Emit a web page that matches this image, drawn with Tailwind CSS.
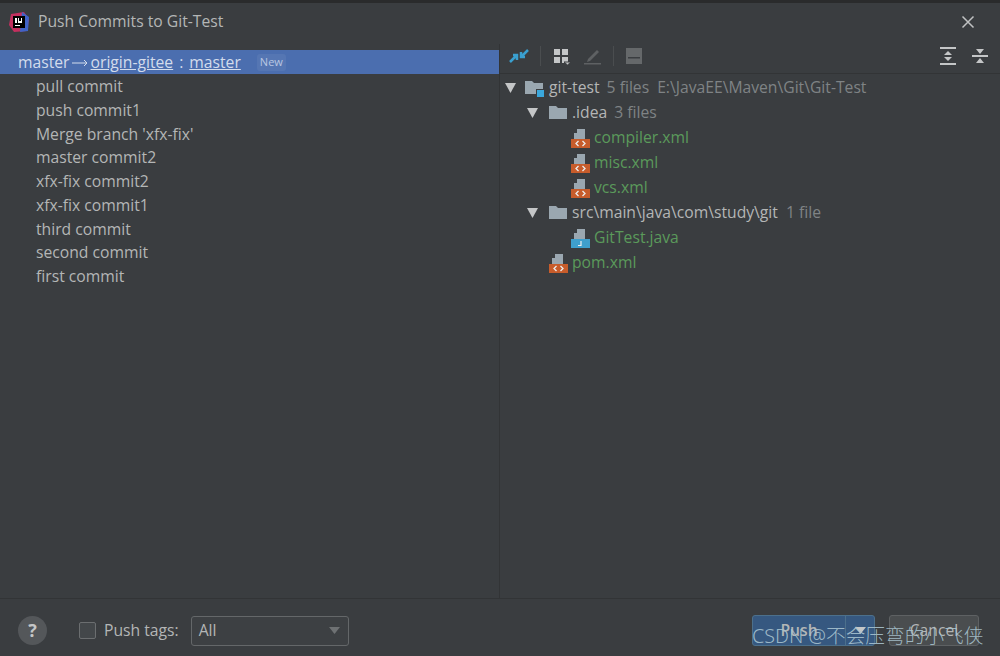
<!DOCTYPE html>
<html lang="en">
<head>
  <meta charset="UTF-8">
  <title>Push Commits to Git-Test</title>
  <script src="https://cdn.jsdelivr.net/npm/@tailwindcss/browser@4"></script>
</head>
<body class="w-[1000px] h-[656px] overflow-hidden bg-[#3a3d40] text-[#b4b6b6] font-['Open_Sans','Noto_Sans',sans-serif] text-[15.7px] relative">
  <div class="h-[3px] bg-[#2a2b2c]"></div>

  <!-- Title bar -->
  <div class="h-[41px] pb-[4px] pl-[8px] pr-[25px] flex items-center">
    <svg width="22" height="22" viewBox="0 0 22 22" class="shrink-0">
      <path d="M3 3 L16 1 L21 8 L19 20 L6 21 L1 14 Z" fill="#c2305f"/>
      <path d="M14 1 L21 6 L20 20 L12 21 Z" fill="#3f63c8"/>
      <rect x="5" y="5" width="12" height="12" fill="#000"/>
      <rect x="7" y="7" width="2" height="5" fill="#fff"/>
      <rect x="10" y="7" width="4" height="5" fill="#fff"/>
      <rect x="11" y="7" width="2" height="3" fill="#000"/>
      <rect x="7" y="14" width="5" height="1" fill="#fff"/>
    </svg>
    <span class="ml-[8px]">Push Commits to Git-Test</span>
    <svg width="14" height="14" viewBox="0 0 14 14" class="ml-auto" fill="none" stroke="#c0c2c3" stroke-width="1.5"><path d="M1.5 1.5 L12.5 12.5 M12.5 1.5 L1.5 12.5"/></svg>
  </div>

  <!-- Main panes -->
  <div class="h-[554px] flex">
    <!-- Commits -->
    <div class="w-[500px] border-r border-[#323436] pt-[6px]">
      <div class="h-[24px] pt-[1px] bg-[#4b6eaf] pl-[18px] flex items-center text-[#d3dcec]">
        <span>master</span>
        <svg width="16" height="8" viewBox="0 0 16 8" class="ml-[2px] mr-[3px]" fill="none" stroke="#d3dcec" stroke-width="1"><path d="M0 4 H15 M12 1 L15 4 L12 7"/></svg>
        <span class="underline">origin-gitee</span>
        <span class="mx-[6px]">:</span>
        <span class="underline">master</span>
        <span class="ml-[16px] text-[11px] text-[#b9c7e2] bg-[#5576b3] rounded-[3px] px-[3px]">New</span>
      </div>
      <ul class="pl-[36px] pt-[1px]">
        <li class="h-[23.75px] leading-[23.75px]">pull commit</li>
        <li class="h-[23.75px] leading-[23.75px]">push commit1</li>
        <li class="h-[23.75px] leading-[23.75px]">Merge branch 'xfx-fix'</li>
        <li class="h-[23.75px] leading-[23.75px]">master commit2</li>
        <li class="h-[23.75px] leading-[23.75px]">xfx-fix commit2</li>
        <li class="h-[23.75px] leading-[23.75px]">xfx-fix commit1</li>
        <li class="h-[23.75px] leading-[23.75px]">third commit</li>
        <li class="h-[23.75px] leading-[23.75px]">second commit</li>
        <li class="h-[23.75px] leading-[23.75px]">first commit</li>
      </ul>
    </div>

    <!-- Changed files -->
    <div class="flex-1 min-w-0">
      <!-- Toolbar -->
      <div class="h-[30px] pb-[6px] border-b border-[#323436] flex items-center pl-[9px] pr-[12px]">
        <svg width="20" height="18" viewBox="0 0 20 18"><path d="M1 15 L7 9 M4 8 H8 V13 M19 3 L13 9 M16 10 H12 V5" fill="none" stroke="#3aa0d0" stroke-width="2.5"/></svg>
        <div class="w-px h-[20px] bg-[#4a4d4f] ml-[11px]"></div>
        <svg width="18" height="18" viewBox="0 0 18 18" class="ml-[12px]" fill="#c4c6c7"><rect x="1" y="2" width="6" height="6"/><rect x="9" y="2" width="6" height="6"/><rect x="1" y="10" width="6" height="6"/><rect x="9" y="10" width="6" height="6"/><path d="M11 15 H18 L14.5 18 Z" stroke="#3a3d40"/></svg>
        <svg width="20" height="18" viewBox="0 0 20 18" class="ml-[12px]"><path d="M5 12 L14 3 L16 5 L7 14 L4 15 Z" fill="#5e6163"/><rect x="1" y="16" width="17" height="1.5" fill="#5e6163"/></svg>
        <div class="w-px h-[20px] bg-[#4a4d4f] ml-[10px]"></div>
        <svg width="16" height="16" viewBox="0 0 16 16" class="ml-[12px]"><rect x="0" y="0" width="16" height="16" fill="#65686a"/><rect x="2" y="9" width="12" height="1.5" fill="#3a3d40"/></svg>
        <svg width="18" height="20" viewBox="0 0 18 20" class="ml-auto" fill="#c4c6c7"><rect x="1" y="1" width="16" height="2"/><rect x="1" y="17" width="16" height="2"/><path d="M9 5 L13 9 H5 Z M9 15 L13 11 H5 Z"/></svg>
        <svg width="16" height="18" viewBox="0 0 16 18" class="ml-[15px]" fill="#c4c6c7"><rect x="0" y="8" width="16" height="2"/><path d="M8 7 L12 2 H4 Z M8 11 L12 16 H4 Z"/></svg>
      </div>

      <!-- Tree -->
      <div class="pt-[1px]">
        <div class="h-[25px] flex items-center pl-[5px]">
          <svg width="11" height="10" viewBox="0 0 11 10" fill="#c4c6c7"><path d="M0 0 H11 L5.5 10 Z"/></svg>
          <svg width="20" height="18" viewBox="0 0 20 18" class="ml-[9px]"><path d="M0 2 H7 L9 4 H18 V15 H0 Z" fill="#9aa7b0"/><rect x="11" y="10" width="8" height="8" fill="#3a3d40"/><rect x="12" y="11" width="7" height="7" fill="#3aa7dc"/></svg>
          <span class="ml-[4px]">git-test</span>
          <span class="ml-[7px] text-[#7f8385]">5 files</span>
          <span class="ml-[8px] text-[#7f8385]">E:\JavaEE\Maven\Git\Git-Test</span>
        </div>
        <div class="h-[25px] flex items-center pl-[27px]">
          <svg width="11" height="10" viewBox="0 0 11 10" fill="#c4c6c7"><path d="M0 0 H11 L5.5 10 Z"/></svg>
          <svg width="18" height="15" viewBox="0 0 18 15" class="ml-[11px]"><path d="M0 1 H7 L9 3 H18 V14 H0 Z" fill="#9aa7b0"/></svg>
          <span class="ml-[5px]">.idea</span>
          <span class="ml-[7px] text-[#7f8385]">3 files</span>
        </div>
        <div class="h-[25px] flex items-center pl-[71px] text-[#5b9a5b]">
          <svg width="19" height="20" viewBox="0 0 19 20"><path d="M6 1 H14 V11 H6 Z M3 5 H6 V11 H3 Z" fill="#9aa7b0"/><rect x="0" y="11" width="19" height="9" fill="#c75c2b"/><path d="M7.5 13 L5 15.5 L7.5 18 M11.5 13 L14 15.5 L11.5 18" fill="none" stroke="#eee" stroke-width="1.3"/></svg>
          <span class="ml-[4px]">compiler.xml</span>
        </div>
        <div class="h-[25px] flex items-center pl-[71px] text-[#5b9a5b]">
          <svg width="19" height="20" viewBox="0 0 19 20"><path d="M6 1 H14 V11 H6 Z M3 5 H6 V11 H3 Z" fill="#9aa7b0"/><rect x="0" y="11" width="19" height="9" fill="#c75c2b"/><path d="M7.5 13 L5 15.5 L7.5 18 M11.5 13 L14 15.5 L11.5 18" fill="none" stroke="#eee" stroke-width="1.3"/></svg>
          <span class="ml-[4px]">misc.xml</span>
        </div>
        <div class="h-[25px] flex items-center pl-[71px] text-[#5b9a5b]">
          <svg width="19" height="20" viewBox="0 0 19 20"><path d="M6 1 H14 V11 H6 Z M3 5 H6 V11 H3 Z" fill="#9aa7b0"/><rect x="0" y="11" width="19" height="9" fill="#c75c2b"/><path d="M7.5 13 L5 15.5 L7.5 18 M11.5 13 L14 15.5 L11.5 18" fill="none" stroke="#eee" stroke-width="1.3"/></svg>
          <span class="ml-[4px]">vcs.xml</span>
        </div>
        <div class="h-[25px] flex items-center pl-[27px]">
          <svg width="11" height="10" viewBox="0 0 11 10" fill="#c4c6c7"><path d="M0 0 H11 L5.5 10 Z"/></svg>
          <svg width="18" height="15" viewBox="0 0 18 15" class="ml-[11px]"><path d="M0 1 H7 L9 3 H18 V14 H0 Z" fill="#9aa7b0"/></svg>
          <span class="ml-[5px]">src\main\java\com\study\git</span>
          <span class="ml-[8px] text-[#7f8385]">1 file</span>
        </div>
        <div class="h-[25px] flex items-center pl-[71px] text-[#5b9a5b]">
          <svg width="19" height="20" viewBox="0 0 19 20"><path d="M6 1 H14 V11 H6 Z M3 5 H6 V11 H3 Z" fill="#9aa7b0"/><rect x="0" y="11" width="19" height="9" fill="#3f9fcc"/><path d="M10 13 V17.5 H7" fill="none" stroke="#eee" stroke-width="1.2"/></svg>
          <span class="ml-[4px]">GitTest.java</span>
        </div>
        <div class="h-[25px] flex items-center pl-[49px] text-[#5b9a5b]">
          <svg width="19" height="20" viewBox="0 0 19 20"><path d="M6 1 H14 V11 H6 Z M3 5 H6 V11 H3 Z" fill="#9aa7b0"/><rect x="0" y="11" width="19" height="9" fill="#c75c2b"/><path d="M7.5 13 L5 15.5 L7.5 18 M11.5 13 L14 15.5 L11.5 18" fill="none" stroke="#eee" stroke-width="1.3"/></svg>
          <span class="ml-[4px]">pom.xml</span>
        </div>
      </div>
    </div>
  </div>

  <!-- Footer -->
  <div class="h-[58px] pt-[6px] border-t border-[#323436] flex items-center pl-[18px] pr-[21px]">
    <div class="w-[29px] h-[29px] rounded-full bg-[#54575a] flex items-center justify-center text-[#c4c6c7] font-bold text-[18px]">?</div>
    <div class="w-[17px] h-[17px] ml-[32px] rounded-[2px] border border-[#6b6e70] bg-[#43474a]"></div>
    <span class="ml-[8px]">Push tags:</span>
    <div class="w-[158px] h-[30px] ml-[12px] rounded-[3px] border border-[#646769] bg-[#3d4043] flex items-center pl-[7px] pr-[8px]">
      <span>All</span>
      <svg width="11" height="7" viewBox="0 0 11 7" class="ml-auto" fill="#6e7173"><path d="M0 0 H11 L5.5 7 Z"/></svg>
    </div>
    <div class="ml-auto w-[123px] h-[31px] rounded-[3px] bg-[#365880] border border-[#4c708c] flex items-center font-semibold">
      <span class="flex-1 text-center">Push</span>
      <span class="w-[29px] h-full border-l border-[#4c708c] flex items-center justify-center">
        <svg width="11" height="7" viewBox="0 0 11 7" fill="#c4c6c7"><path d="M0 0 H11 L5.5 7 Z"/></svg>
      </span>
    </div>
    <div class="ml-[14px] w-[90px] h-[31px] rounded-[3px] bg-[#4a4d4f] border border-[#5e6163] flex items-center justify-center">Cancel</div>
  </div>

  <!-- Watermark over the buttons -->
  <div class="absolute left-[752px] top-[623px] text-[19.7px] leading-[26px] text-[#a9c4d0]/90 font-['Noto_Sans','Noto_Sans_CJK_SC',sans-serif] font-light whitespace-nowrap">CSDN @不会压弯的小飞侠</div>
</body>
</html>
